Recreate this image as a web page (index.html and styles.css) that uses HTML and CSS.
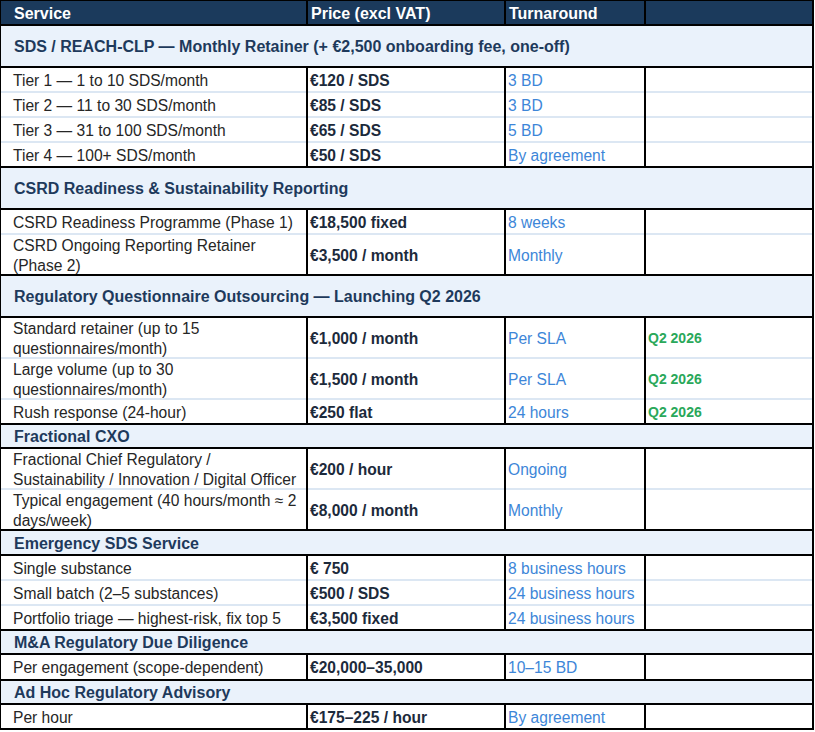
FILE: index.html
```html
<!DOCTYPE html>
<html lang="en">
<head>
<meta charset="utf-8">
<title>Services price list</title>
<link rel="stylesheet" href="styles.css">
</head>
<body>
<div class="sheet">
  <div class="row head">
    <div class="c svc">Service</div>
    <div class="c">Price (excl VAT)</div>
    <div class="c">Turnaround</div>
    <div class="c"></div>
  </div>

  <div class="row sec big"><div class="c">SDS / REACH-CLP — Monthly Retainer (+ €2,500 onboarding fee, one-off)</div></div>
  <div class="row d"><div class="c svc">Tier 1 — 1 to 10 SDS/month</div><div class="c price">€120 / SDS</div><div class="c turn">3 BD</div><div class="c note"></div></div>
  <div class="row d"><div class="c svc">Tier 2 — 11 to 30 SDS/month</div><div class="c price">€85 / SDS</div><div class="c turn">3 BD</div><div class="c note"></div></div>
  <div class="row d"><div class="c svc">Tier 3 — 31 to 100 SDS/month</div><div class="c price">€65 / SDS</div><div class="c turn">5 BD</div><div class="c note"></div></div>
  <div class="row d"><div class="c svc">Tier 4 — 100+ SDS/month</div><div class="c price">€50 / SDS</div><div class="c turn">By agreement</div><div class="c note"></div></div>

  <div class="row sec big"><div class="c">CSRD Readiness &amp; Sustainability Reporting</div></div>
  <div class="row d"><div class="c svc">CSRD Readiness Programme (Phase 1)</div><div class="c price">€18,500 fixed</div><div class="c turn">8 weeks</div><div class="c note"></div></div>
  <div class="row d two"><div class="c svc">CSRD Ongoing Reporting Retainer (Phase 2)</div><div class="c price">€3,500 / month</div><div class="c turn">Monthly</div><div class="c note"></div></div>

  <div class="row sec big"><div class="c">Regulatory Questionnaire Outsourcing — Launching Q2 2026</div></div>
  <div class="row d two"><div class="c svc">Standard retainer (up to 15 questionnaires/month)</div><div class="c price">€1,000 / month</div><div class="c turn">Per SLA</div><div class="c note">Q2 2026</div></div>
  <div class="row d two"><div class="c svc">Large volume (up to 30 questionnaires/month)</div><div class="c price">€1,500 / month</div><div class="c turn">Per SLA</div><div class="c note">Q2 2026</div></div>
  <div class="row d"><div class="c svc">Rush response (24-hour)</div><div class="c price">€250 flat</div><div class="c turn">24 hours</div><div class="c note">Q2 2026</div></div>

  <div class="row sec"><div class="c">Fractional CXO</div></div>
  <div class="row d two"><div class="c svc">Fractional Chief Regulatory / Sustainability / Innovation / Digital Officer</div><div class="c price">€200 / hour</div><div class="c turn">Ongoing</div><div class="c note"></div></div>
  <div class="row d two"><div class="c svc">Typical engagement (40 hours/month ≈ 2 days/week)</div><div class="c price">€8,000 / month</div><div class="c turn">Monthly</div><div class="c note"></div></div>

  <div class="row sec mid"><div class="c">Emergency SDS Service</div></div>
  <div class="row d"><div class="c svc">Single substance</div><div class="c price">€ 750</div><div class="c turn">8 business hours</div><div class="c note"></div></div>
  <div class="row d"><div class="c svc">Small batch (2–5 substances)</div><div class="c price">€500 / SDS</div><div class="c turn">24 business hours</div><div class="c note"></div></div>
  <div class="row d"><div class="c svc">Portfolio triage — highest-risk, fix top 5</div><div class="c price">€3,500 fixed</div><div class="c turn">24 business hours</div><div class="c note"></div></div>

  <div class="row sec"><div class="c">M&amp;A Regulatory Due Diligence</div></div>
  <div class="row d tall"><div class="c svc">Per engagement (scope-dependent)</div><div class="c price">€20,000–35,000</div><div class="c turn">10–15 BD</div><div class="c note"></div></div>

  <div class="row sec"><div class="c">Ad Hoc Regulatory Advisory</div></div>
  <div class="row d"><div class="c svc">Per hour</div><div class="c price">€175–225 / hour</div><div class="c turn">By agreement</div><div class="c note"></div></div>
</div>
</body>
</html>
```

FILE: styles.css
```css
body {
  margin: 0;
  background: #ffffff;
}

.sheet {
  width: 814px;
  box-sizing: border-box;
  border-top: 1px solid #000;
  border-left: 1px solid #000;
  border-bottom: 2px solid #000;
  font-family: "Liberation Sans", Arial, sans-serif;
  font-size: 15.6px;
  line-height: 19.5px;
  color: #262626;
}

.row {
  display: grid;
  grid-template-columns: 307px 198px 140px 168px;
}

.c {
  display: flex;
  align-items: center;
  box-sizing: border-box;
  border-right: 2px solid #000;
  padding: 2px 4px 0 2px;
  min-height: 23px;
  background: #ffffff;
}

/* header */
.head .c {
  height: 23px;
  background: #1b3a5c;
  color: #ffffff;
  font-weight: bold;
  font-size: 16px;
  padding-left: 3px;
}
.head .c.svc {
  padding-left: 13px;
}

/* section rows */
.sec {
  grid-template-columns: 813px;
}
.sec .c {
  height: 26px;
  border-top: 2px solid #000;
  border-bottom: 2px solid #000;
  background: #eaf2fb;
  color: #1e3a5c;
  font-weight: bold;
  font-size: 16px;
  padding-left: 13px;
}
.sec.mid .c {
  height: 27px;
}
.sec.big .c {
  height: 44px;
}

/* data rows: light separator on top */
.d .c {
  min-height: 25px;
  padding-top: 4px;
  background: linear-gradient(#dce7f3, #dce7f3) top left / 100% 2px no-repeat, #ffffff;
}
.d.two .c {
  height: 41px;
}
.sec + .d .c {
  min-height: 23px;
  padding-top: 2px;
  background: #ffffff;
}
.sec + .d.two .c {
  height: 39px;
}
.sec + .d.tall .c {
  min-height: 24px;
}

.d .c.svc {
  padding-left: 12px;
}

.price {
  font-weight: bold;
  color: #1c2a3b;
}

.turn {
  color: #3d86d8;
}

.note {
  font-weight: bold;
  font-size: 14px;
  color: #2aa85a;
}
```
